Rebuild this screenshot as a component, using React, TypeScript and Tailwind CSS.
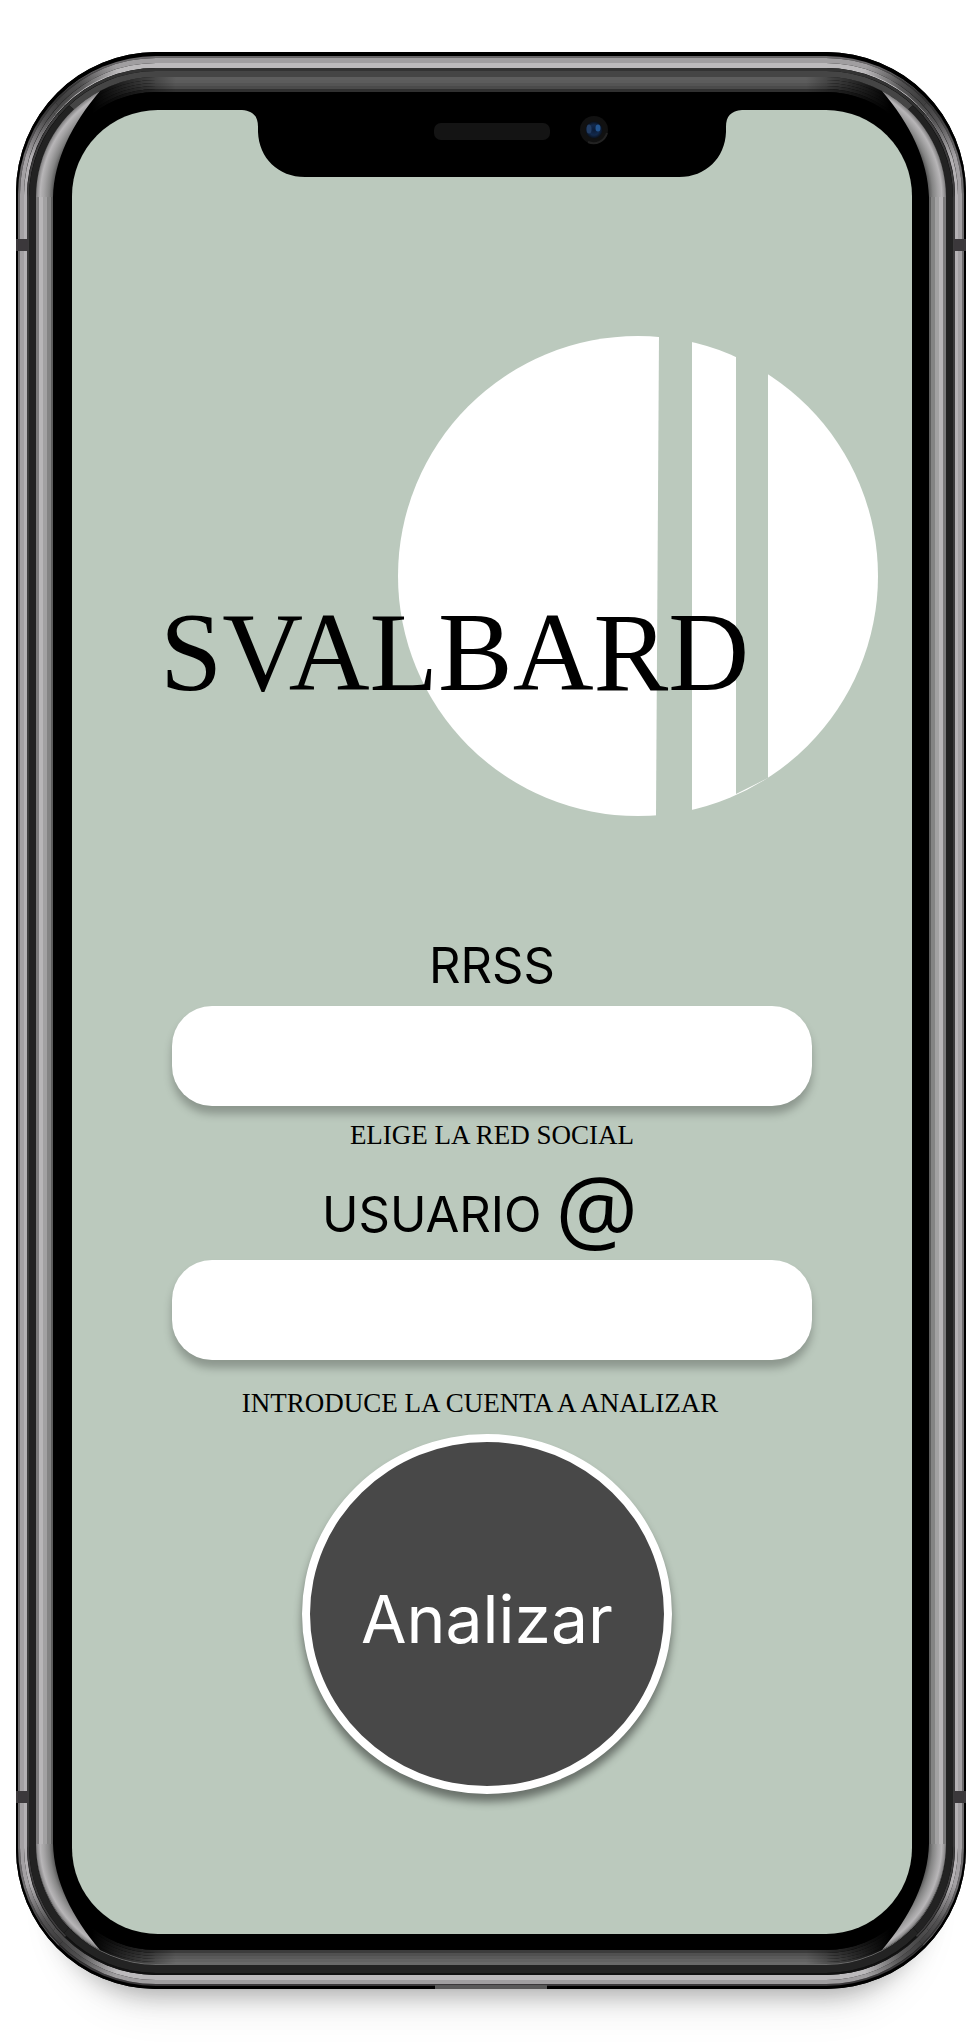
import type { ReactNode } from "react";

// Metal bands of the device edge, from the outside in.
const bands = [
  "rounded-[140px] border-x-2 border-t-4 border-b-3 border-black",
  "rounded-[138px] border-2 border-x-[#6c6a6c] border-t-[#6a686a] border-b-[#3a383a]",
  "rounded-[136px] border-x-4 border-t-5 border-b-4 border-x-[#a3a0a3] border-y-[#a09ea0]",
  "rounded-[132px] border-x-3 border-y-5 border-x-[#b4b1b4] border-y-[#bcbabc]",
  "rounded-[129px] border-x-2 border-t-3 border-b-2 border-x-[#3c3b3c] border-t-[#333333] border-b-[#111111]",
  "rounded-[127px] border-x-7 border-t-6 border-b-8 border-x-[#222222] border-t-[#454545] border-b-[#232323]",
  "rounded-[120px] border-3 border-x-[#7c7b7c] border-t-[#5e5e5e] border-b-[#6a6a6a]",
  "rounded-[117px] border-x-4 border-y-3 border-x-[#b8b6b8] border-t-[#5c5c5c] border-b-[#636363]",
  "rounded-[113px] border-x-4 border-y-3 border-x-[#a2a1a2] border-t-[#545454] border-b-[#5a5a5a]",
  "rounded-[109px] border-x-4 border-y-3 border-x-[#848484] border-t-[#4a4a4a] border-b-[#505050]",
  "rounded-[105px] border-x-2 border-y-3 border-x-[#5c5c5c] border-t-[#303030] border-b-[#3c3c3c]",
  "rounded-[103px] border-l-19 border-r-17 border-t-18 border-b-16 border-black bg-black",
];

const corners = [
  "absolute top-0 left-0",
  "absolute top-0 right-0 -scale-x-100",
  "absolute bottom-0 left-0 -scale-y-100",
  "absolute right-0 bottom-0 -scale-100",
];

// Darkens the rim where it turns and tapers the inner highlight.
function CornerShade({ className }: { className: string }) {
  return (
    <svg className={className} width="160" height="145" viewBox="0 0 160 145" aria-hidden="true">
      <defs>
        <radialGradient id="rim" gradientUnits="userSpaceOnUse" cx="42" cy="46" r="66">
          <stop offset="0" stopColor="#1c1c1c" stopOpacity="0.75" />
          <stop offset="0.4" stopColor="#1c1c1c" stopOpacity="0.6" />
          <stop offset="1" stopColor="#1c1c1c" stopOpacity="0" />
        </radialGradient>
        <linearGradient id="fade" gradientUnits="userSpaceOnUse" x1="76" y1="0" x2="160" y2="0">
          <stop offset="0" stopColor="#000000" />
          <stop offset="1" stopColor="#000000" stopOpacity="0" />
        </linearGradient>
        <radialGradient id="glow" gradientUnits="userSpaceOnUse" cx="140" cy="145" r="120">
          <stop offset="0.86" stopColor="#5c5c5c" />
          <stop offset="0.89" stopColor="#848484" />
          <stop offset="0.93" stopColor="#a2a1a2" />
          <stop offset="0.965" stopColor="#b8b6b8" />
          <stop offset="1" stopColor="#7c7b7c" />
        </radialGradient>
      </defs>
      <path d="M7 140A133 130 0 0 1 140 10" fill="none" stroke="url(#rim)" strokeWidth="10" />
      <path
        d="M20 145A120 120 0 0 1 140 25H160V42H140A103 103 0 0 0 37 145Z"
        fill="url(#fade)"
      />
      <path d="M20 145A120 120 0 0 1 84 39C56 72 38 108 37 145Z" fill="url(#glow)" />
    </svg>
  );
}

function Notch() {
  return (
    <svg
      className="absolute top-0 left-1/2 -translate-x-1/2"
      width="500"
      height="68"
      viewBox="0 0 500 68"
      aria-hidden="true"
    >
      <defs>
        <radialGradient id="lens" cx="50%" cy="50%" r="50%">
          <stop offset="0" stopColor="#0c1c38" />
          <stop offset="0.6" stopColor="#12294c" />
          <stop offset="1" stopColor="#0a0f18" />
        </radialGradient>
      </defs>
      <path
        d="M0 0H500C489 1 484 6 484 17V22C483 48 464 67 437 67H63C36 67 17 48 16 22V17C16 6 11 1 0 0Z"
        fill="#000000"
      />
      <rect x="192" y="13" width="116" height="17" rx="7" fill="#141414" />
      <circle cx="352" cy="20" r="14" fill="#111111" />
      <path d="M346 32A14 14 0 0 0 365 23" fill="none" stroke="#222222" strokeWidth="2" />
      <circle cx="352" cy="20" r="8.5" fill="url(#lens)" />
      <ellipse cx="347" cy="19" rx="2.5" ry="4.5" fill="#233d63" />
      <ellipse cx="356" cy="18" rx="2.5" ry="3.5" fill="#235590" />
    </svg>
  );
}

function Emblem() {
  return (
    <svg
      className="col-start-1 row-start-1 mr-[34px] h-auto w-[480px] max-w-full justify-self-end"
      viewBox="0 0 480 480"
      aria-hidden="true"
    >
      <circle cx="240" cy="240" r="240" fill="#ffffff" />
      <path d="M261 0H294V480H258Z" fill="#bbc9bd" />
      <path d="M338 0H370V442L338 458Z" fill="#bbc9bd" />
    </svg>
  );
}

function Phone({ children }: { children: ReactNode }) {
  const screen = (
    <div className="relative overflow-hidden rounded-[86px] bg-[#bbc9bd]">
      <Notch />
      {children}
    </div>
  );
  const shell = bands.reduceRight<ReactNode>(
    (inner, band) => <div className={band}>{inner}</div>,
    screen,
  );
  return (
    <div className="relative w-full rounded-[140px] bg-black shadow-[0_44px_24px_-38px_rgba(0,0,0,0.3),0_64px_40px_-40px_rgba(0,0,0,0.06)]">
      {shell}
      {corners.map((corner) => (
        <CornerShade key={corner} className={corner} />
      ))}
      <span className="absolute top-[187px] left-0 h-3 w-3 bg-[#3b383b]" />
      <span className="absolute top-[187px] right-0 h-3 w-3 bg-[#3b383b]" />
      <span className="absolute bottom-[186px] left-0 h-3 w-3 bg-[#3b383b]" />
      <span className="absolute right-0 bottom-[186px] h-3 w-3 bg-[#3b383b]" />
      <span className="absolute bottom-0 left-1/2 h-1 w-28 -translate-x-1/2 bg-[#585858]" />
    </div>
  );
}

const fieldClass =
  "mt-[10px] h-[100px] w-full rounded-[40px] bg-white px-10 text-[40px] text-black shadow-[0_8px_8px_rgba(0,0,0,0.25)] outline-none";
const labelClass =
  "text-[49px] leading-[60px] text-black font-['Inter',sans-serif]";
const hintClass =
  "text-center text-[27px] leading-[32px] text-black font-['Liberation_Serif',serif]";

export default function App() {
  return (
    <main className="min-h-screen bg-white pt-[52px] pr-[14px] pb-[52px] pl-4 font-['Inter',sans-serif]">
      <Phone>
        <header className="grid pt-[226px]">
          <Emblem />
          <h1 className="col-start-1 row-start-1 self-end pb-[108px] pl-[88px] text-[112px] leading-none text-black font-['Liberation_Serif',serif]">
            SVALBARD
          </h1>
        </header>
        <form
          className="mx-auto mt-[120px] flex w-full max-w-[640px] flex-col pb-[140px]"
          onSubmit={(event) => event.preventDefault()}
        >
          <label htmlFor="network" className={`text-center ${labelClass}`}>
            RRSS
          </label>
          <input
            id="network"
            type="text"
            aria-describedby="network-hint"
            className={fieldClass}
          />
          <p id="network-hint" className={`mt-[13px] ${hintClass}`}>
            ELIGE LA RED SOCIAL
          </p>

          <label
            htmlFor="account"
            className={`mt-[29px] flex h-[70px] items-center justify-center gap-[14px] pr-6 ${labelClass}`}
          >
            USUARIO
            <span className="pb-[14px] text-[92px] leading-none font-medium font-['Open_Sans',sans-serif]">
              @
            </span>
          </label>
          <input
            id="account"
            type="text"
            aria-describedby="account-hint"
            className={fieldClass}
          />
          <p id="account-hint" className={`mt-[27px] pr-6 ${hintClass}`}>
            INTRODUCE LA CUENTA A ANALIZAR
          </p>

          <div className="mt-[15px] flex justify-center pr-[10px]">
            <button
              type="submit"
              className="h-[360px] w-[370px] rounded-[50%] border-8 border-white bg-[#484848] pt-[10px] text-[66px] leading-none text-white shadow-[0_8px_8px_rgba(0,0,0,0.44)]"
            >
              Analizar
            </button>
          </div>
        </form>
      </Phone>
    </main>
  );
}
